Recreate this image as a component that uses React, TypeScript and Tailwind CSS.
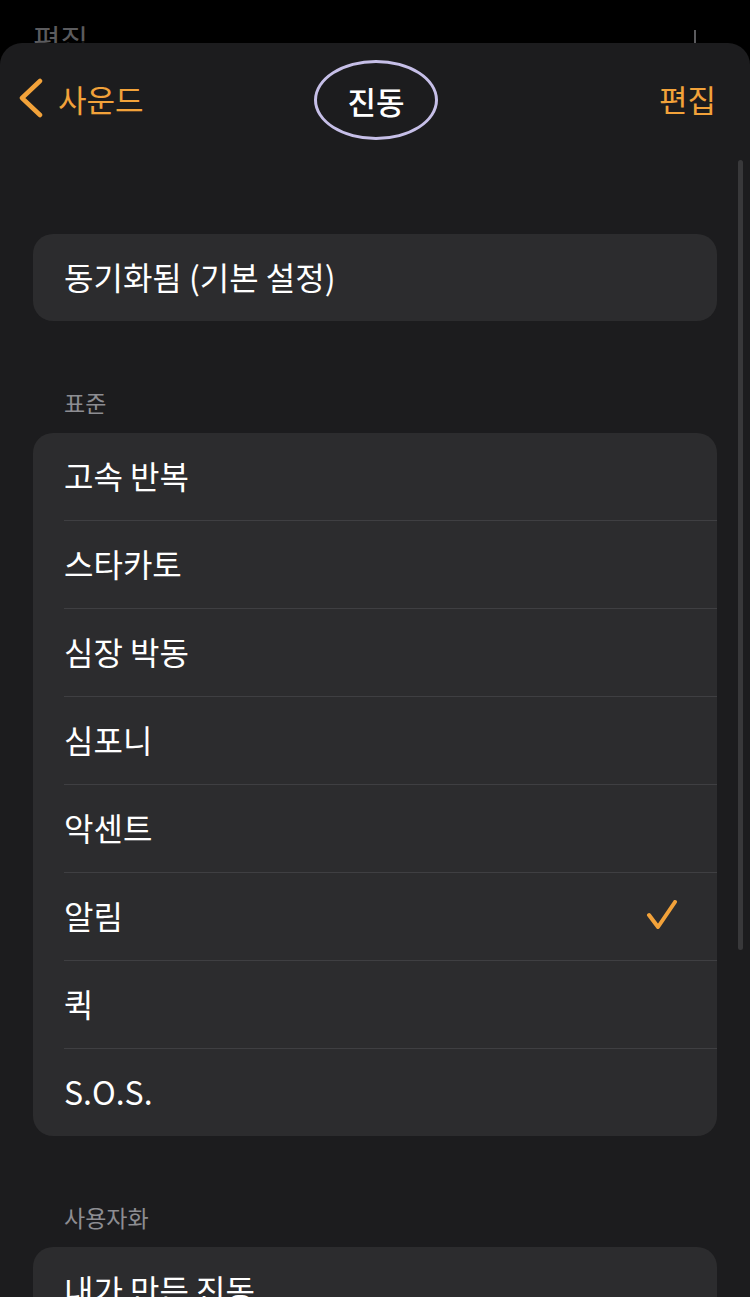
import React from "react";

const KR = { fontFamily: '"Noto Sans CJK KR", "Noto Sans", sans-serif' };

const rows = ["고속 반복", "스타카토", "심장 박동", "심포니", "악센트", "알림", "퀵", "S.O.S."];

export default function App() {
  return (
    <div className="w-[750px] h-[1297px] overflow-hidden bg-black" style={KR}>
      <div className="relative h-[43px] overflow-hidden">
        <div className="absolute left-[33px] top-[18px] text-[30px] leading-[40px] text-[#5b5b5e]">편집</div>
        <div className="absolute left-[694px] top-[30px] w-[2px] h-[13px] bg-[#5b5b5e]" />
      </div>
      <div className="relative bg-[#1c1c1e] rounded-t-[22px] h-[1254px]">
        <div className="absolute right-[7px] top-[117px] w-[5px] h-[790px] rounded-full bg-[#38383a]" />
        <div className="relative h-[110px] flex items-center justify-between px-[18px]">
          <div className="flex items-center gap-[14px] text-[#f2a23a]">
            <svg width="26" height="40" viewBox="0 0 26 40">
              <polyline points="22,3 4,20 22,37" fill="none" stroke="#f2a23a" strokeWidth="4.5" strokeLinecap="round" strokeLinejoin="round" />
            </svg>
            <span className="text-[31px] leading-none">사운드</span>
          </div>
          <div className="absolute left-[314px] top-[17px] w-[124px] h-[80px] rounded-[50%] border-[3px] border-[#c6bfe8] flex items-center justify-center">
            <span className="text-[31px] leading-none font-medium text-white">진동</span>
          </div>
          <span className="text-[31px] leading-none text-[#f2a23a] pr-[16px]">편집</span>
        </div>
        <div className="mt-[81px] mx-[33px] bg-[#2c2c2e] rounded-[20px] h-[87px] flex items-center pl-[31px]">
          <span className="text-[32px] text-white pb-[4px]">동기화됨 (기본 설정)</span>
        </div>
        <div className="mt-[66px] pl-[64px] text-[23px] leading-[30px] text-[#8d8d92]">표준</div>
        <div className="mt-[16px] mx-[33px] bg-[#2c2c2e] rounded-[20px] overflow-hidden">
          {rows.map((r, i) => (
            <div key={r} className="pl-[31px]">
              <div className={`flex items-center justify-between pr-[37px] ${i < rows.length - 1 ? "h-[88px] border-b border-[#3f3f42]" : "h-[87px]"}`}>
                <span className="text-[32px] text-white pb-[4px]">{r}</span>
                {r === "알림" && (
                  <svg width="34" height="34" viewBox="0 0 34 34">
                    <polyline points="3,15 12,27 29,2" fill="none" stroke="#f2a23a" strokeWidth="4" strokeLinecap="round" strokeLinejoin="round" />
                  </svg>
                )}
              </div>
            </div>
          ))}
        </div>
        <div className="mt-[66px] pl-[64px] text-[23px] leading-[30px] text-[#8d8d92]">사용자화</div>
        <div className="mt-[15px] mx-[33px] bg-[#2c2c2e] rounded-[20px] h-[88px] flex items-center pl-[31px]">
          <span className="text-[32px] text-white pb-[4px]">내가 만든 진동</span>
        </div>
      </div>
    </div>
  );
}
